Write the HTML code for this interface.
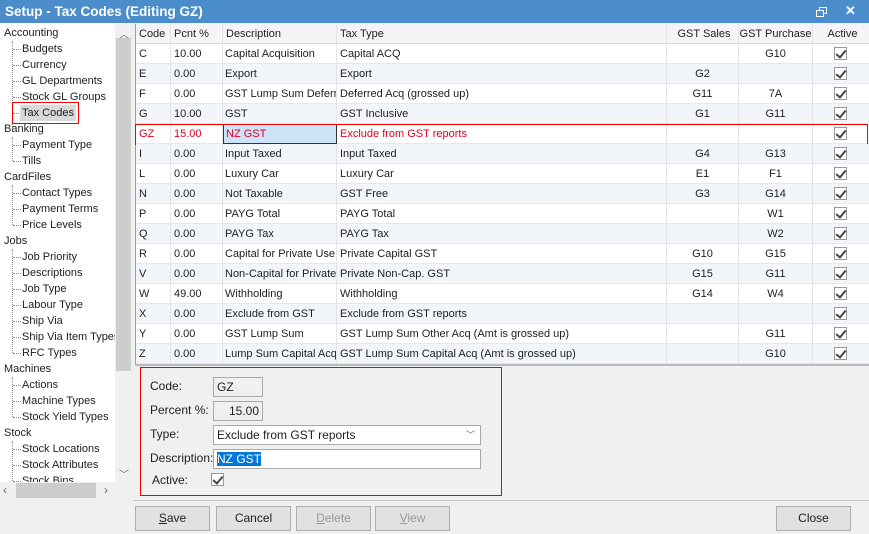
<!DOCTYPE html>
<html><head><style>
*{box-sizing:border-box;margin:0;padding:0}
body{width:869px;height:534px;overflow:hidden;background:#f0f0f0;font-family:"Liberation Sans",sans-serif;font-size:11px;color:#1e1e1e;position:relative}
.a{position:absolute;white-space:nowrap}
#title{left:0;top:0;width:869px;height:23px;background:#4b8dcb;color:#fff;font-weight:bold;font-size:13.5px;line-height:23px;padding-left:5px}
#tree{left:0;top:23px;width:115px;height:459px;background:#fff}
.ti{position:absolute;left:22px;height:16px;line-height:16px}
.th{position:absolute;left:4px;height:16px;line-height:16px}
.dl{position:absolute;left:12px;border-left:1px dotted #888}
.dh{position:absolute;left:13px;width:8px;border-top:1px dotted #888}
#grid{left:135px;top:24px;width:734px;height:341px;background:#fff;border-left:1px solid #a0a0a0}
.row{position:absolute;left:0;width:734px;height:20px;line-height:20px}
.c{position:absolute;top:0;height:20px;padding-left:3px;border-right:1px solid #e4e4e4;overflow:hidden}
.cb{position:absolute;left:835px;width:13px;height:13px;border:1px solid #999;background:#fff}
.cb:after{content:"";position:absolute;left:3px;top:0px;width:4px;height:8px;border:solid #444;border-width:0 2px 2px 0;transform:rotate(40deg)}
.btn{position:absolute;top:506px;height:25px;border:1px solid #adadad;background:#e1e1e1;text-align:center;line-height:23px;font-size:12px}
.lab{position:absolute;left:150px;font-size:12px}
.inp{position:absolute;border:1px solid #a9a9a9;background:#fff;height:20px;line-height:18px;padding-left:3px;font-size:12px}
</style></head><body>
<div class="a" id="title">Setup - Tax Codes (Editing GZ)</div>
<div class="a" style="left:819px;top:7px;width:8px;height:7px;border:1.5px solid #fff"></div>
<div class="a" style="left:816px;top:10px;width:8px;height:7px;border:1.5px solid #fff;background:#4b8dcb"></div>
<div class="a" style="left:845px;top:3px;color:#fff;font-size:13px;font-weight:bold">✕</div>

<div class="a" id="tree">
<div class="th" style="top:2px">Accounting</div>
<div class="dl" style="top:18px;height:88px"></div>
<div class="dh" style="top:26px"></div><div class="ti" style="top:18px">Budgets</div>
<div class="dh" style="top:42px"></div><div class="ti" style="top:34px">Currency</div>
<div class="dh" style="top:58px"></div><div class="ti" style="top:50px">GL Departments</div>
<div class="dh" style="top:74px"></div><div class="ti" style="top:66px">Stock GL Groups</div>
<div class="dh" style="top:90px"></div><div class="ti" style="top:82px;background:#d9d9d9;padding:0 2px;left:20px">Tax Codes</div>
<div class="a" style="left:12px;top:79px;width:67px;height:22px;border:1px solid #e00"></div>
<div class="th" style="top:98px">Banking</div>
<div class="dl" style="top:114px;height:24px"></div>
<div class="dh" style="top:122px"></div><div class="ti" style="top:114px">Payment Type</div>
<div class="dh" style="top:138px"></div><div class="ti" style="top:130px">Tills</div>
<div class="th" style="top:146px">CardFiles</div>
<div class="dl" style="top:162px;height:40px"></div>
<div class="dh" style="top:170px"></div><div class="ti" style="top:162px">Contact Types</div>
<div class="dh" style="top:186px"></div><div class="ti" style="top:178px">Payment Terms</div>
<div class="dh" style="top:202px"></div><div class="ti" style="top:194px">Price Levels</div>
<div class="th" style="top:210px">Jobs</div>
<div class="dl" style="top:226px;height:104px"></div>
<div class="dh" style="top:234px"></div><div class="ti" style="top:226px">Job Priority</div>
<div class="dh" style="top:250px"></div><div class="ti" style="top:242px">Descriptions</div>
<div class="dh" style="top:266px"></div><div class="ti" style="top:258px">Job Type</div>
<div class="dh" style="top:282px"></div><div class="ti" style="top:274px">Labour Type</div>
<div class="dh" style="top:298px"></div><div class="ti" style="top:290px">Ship Via</div>
<div class="dh" style="top:314px"></div><div class="ti" style="top:306px">Ship Via Item Types</div>
<div class="dh" style="top:330px"></div><div class="ti" style="top:322px">RFC Types</div>
<div class="th" style="top:338px">Machines</div>
<div class="dl" style="top:354px;height:40px"></div>
<div class="dh" style="top:362px"></div><div class="ti" style="top:354px">Actions</div>
<div class="dh" style="top:378px"></div><div class="ti" style="top:370px">Machine Types</div>
<div class="dh" style="top:394px"></div><div class="ti" style="top:386px">Stock Yield Types</div>
<div class="th" style="top:402px">Stock</div>
<div class="dl" style="top:418px;height:40px"></div>
<div class="dh" style="top:426px"></div><div class="ti" style="top:418px">Stock Locations</div>
<div class="dh" style="top:442px"></div><div class="ti" style="top:434px">Stock Attributes</div>
<div class="dh" style="top:458px"></div><div class="ti" style="top:450px;height:9px;overflow:hidden">Stock Bins</div>
</div>
<div class="a" style="left:115px;top:23px;width:17px;height:459px;background:#f0f0f0"></div>
<div class="a" style="left:116px;top:38px;width:15px;height:333px;background:#cdcdcd"></div>
<div class="a" style="left:119px;top:26px;color:#666;font-size:10px">︿</div>
<div class="a" style="left:119px;top:466px;color:#666;font-size:10px">﹀</div>
<div class="a" style="left:0;top:482px;width:132px;height:17px;background:#f0f0f0"></div>
<div class="a" style="left:16px;top:483px;width:80px;height:15px;background:#cdcdcd"></div>
<div class="a" style="left:3px;top:483px;color:#666;font-size:12px">‹</div>
<div class="a" style="left:104px;top:483px;color:#666;font-size:12px">›</div>

<div class="a" id="grid">
<div class="row" style="top:0;background:#f5f5f5;border-bottom:1px solid #d5d5d5">
<div class="c" style="left:0;width:35px">Code</div><div class="c" style="left:35px;width:52px">Pcnt %</div><div class="c" style="left:87px;width:114px">Description</div><div class="c" style="left:201px;width:330px">Tax Type</div><div class="c" style="left:531px;width:72px;text-align:center">GST Sales</div><div class="c" style="left:603px;width:74px;text-align:center;padding:0">GST Purchase</div><div class="c" style="left:677px;width:57px;text-align:center">Active</div>
</div>
</div>
<div id="rows"></div>
<script>
var d=[["C","10.00","Capital Acquisition","Capital ACQ","","G10"],["E","0.00","Export","Export","G2",""],["F","0.00","GST Lump Sum Deferred","Deferred Acq (grossed up)","G11","7A"],["G","10.00","GST","GST Inclusive","G1","G11"],["GZ","15.00","NZ GST","Exclude from GST reports","",""],["I","0.00","Input Taxed","Input Taxed","G4","G13"],["L","0.00","Luxury Car","Luxury Car","E1","F1"],["N","0.00","Not Taxable","GST Free","G3","G14"],["P","0.00","PAYG Total","PAYG Total","","W1"],["Q","0.00","PAYG Tax","PAYG Tax","","W2"],["R","0.00","Capital for Private Use","Private Capital GST","G10","G15"],["V","0.00","Non-Capital for Private","Private Non-Cap. GST","G15","G11"],["W","49.00","Withholding","Withholding","G14","W4"],["X","0.00","Exclude from GST","Exclude from GST reports","",""],["Y","0.00","GST Lump Sum","GST Lump Sum Other Acq (Amt is grossed up)","","G11"],["Z","0.00","Lump Sum Capital Acq","GST Lump Sum Capital Acq (Amt is grossed up)","","G10"]];
var h="";
d.forEach(function(r,i){var t=44+i*20,gz=r[0]=="GZ";
h+='<div class="a row" style="left:136px;top:'+t+'px;background:'+(i%2?'#f2f5fa':'#fff')+';border-bottom:1px solid #e8e8e8;'+(gz?'color:#e00020;':'')+'">'+
'<div class="c" style="left:0;width:35px">'+r[0]+'</div><div class="c" style="left:35px;width:52px">'+r[1]+'</div><div class="c" style="left:87px;width:114px;padding-left:2px;'+(gz?'background:#cde3f7;border:1px solid #333;line-height:18px;':'')+'">'+r[2]+'</div><div class="c" style="left:201px;width:330px">'+r[3]+'</div><div class="c" style="left:531px;width:72px;text-align:center;padding:0">'+r[4]+'</div><div class="c" style="left:603px;width:74px;text-align:center;padding:0">'+r[5]+'</div><div class="cb" style="left:698px;top:3px"></div></div>';
if(gz)h+='<div class="a" style="left:135px;top:'+t+'px;width:733px;height:21px;border:1px solid #e00"></div>';});
document.getElementById("rows").innerHTML=h;
</script>
<div class="a" style="left:135px;top:364px;width:734px;height:2px;background:#bbb"></div>
<div class="a" style="left:140px;top:367px;width:362px;height:129px;border:1px solid #e00"></div>
<div class="lab" style="top:379px">Code:</div>
<div class="inp" style="left:213px;top:377px;width:50px;background:#f0f0f0">GZ</div>
<div class="lab" style="top:403px">Percent %:</div>
<div class="inp" style="left:213px;top:401px;width:50px;background:#f0f0f0;text-align:right;padding-right:3px">15.00</div>
<div class="lab" style="top:427px">Type:</div>
<div class="inp" style="left:213px;top:425px;width:268px">Exclude from GST reports<span style="position:absolute;right:5px;top:0;color:#666;font-size:9px">﹀</span></div>
<div class="lab" style="top:451px">Description:</div>
<div class="inp" style="left:213px;top:449px;width:268px"><span style="background:#0078d7;color:#fff">NZ GST</span></div>
<div class="lab" style="top:473px;left:152px">Active:</div>
<div class="cb" style="left:211px;top:473px"></div>
<div class="a" style="left:133px;top:500px;width:736px;height:1px;background:#c8c8c8"></div>
<div class="btn" style="left:135px;width:75px"><u>S</u>ave</div>
<div class="btn" style="left:216px;width:75px">Cancel</div>
<div class="btn" style="left:296px;width:75px;color:#999"><u>D</u>elete</div>
<div class="btn" style="left:375px;width:75px;color:#999"><u>V</u>iew</div>
<div class="btn" style="left:776px;width:75px">Close</div>
</body></html>
